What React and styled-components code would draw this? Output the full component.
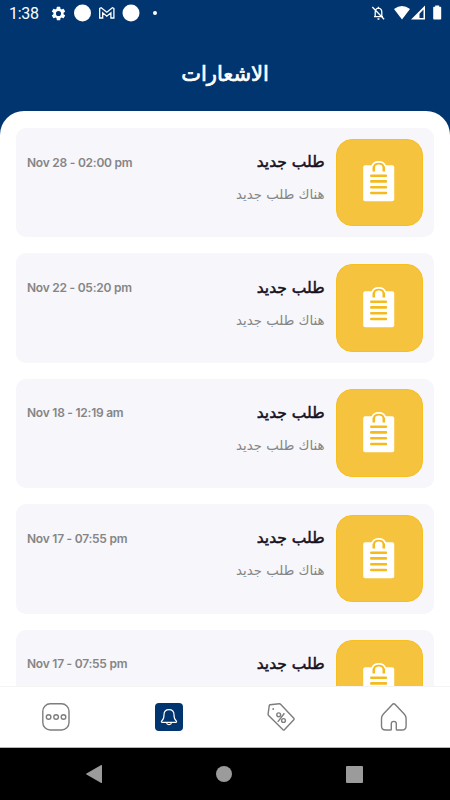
import React from 'react'
import styled, { createGlobalStyle } from 'styled-components'

const notifications = [
  { id: 1, date: 'Nov 28 - 02:00 pm' },
  { id: 2, date: 'Nov 22 - 05:20 pm' },
  { id: 3, date: 'Nov 18 - 12:19 am' },
  { id: 4, date: 'Nov 17 - 07:55 pm' },
  { id: 5, date: 'Nov 17 - 07:55 pm' }
]

const GlobalStyle = createGlobalStyle`
  * {
    box-sizing: border-box;
  }

  body {
    margin: 0;
    overflow: hidden;
  }
`

const Screen = styled.div`
  display: flex;
  flex-direction: column;
  width: 450px;
  height: 800px;
  overflow: hidden;
  background: #003570;
  font-family: 'DejaVu Sans', sans-serif;
`

const StatusBar = styled.div`
  display: flex;
  flex: none;
  justify-content: space-between;
  height: 28px;
  padding: 0 7px 0 9px;
  color: #fff;
`

const StatusGroup = styled.div`
  display: flex;
  align-items: center;
  height: 26px;

  svg {
    display: block;
  }
`

const Clock = styled.span`
  width: 41px;
  padding-top: 1px;
  font: 400 16px/27px Roboto, sans-serif;
  letter-spacing: -0.3px;
`

const Header = styled.header`
  display: flex;
  flex: none;
  align-items: center;
  justify-content: center;
  height: 83px;
`

const Title = styled.h1`
  margin: 0;
  padding-top: 8px;
  color: #fff;
  font-size: 21px;
  font-weight: normal;
  line-height: 30px;
  -webkit-text-stroke: 0.7px currentcolor;
`

const Sheet = styled.main`
  flex: 1;
  min-height: 0;
  overflow: hidden;
  padding: 17px 16px 0;
  border-radius: 24px 24px 0 0;
  background: #fff;
`

const List = styled.div`
  display: flex;
  flex-direction: column;
  gap: 16px;
`

const Card = styled.article`
  display: flex;
  flex: none;
  justify-content: space-between;
  height: 109.4px;
  padding: 10.7px 11px;
  border-radius: 10px;
  background: #f6f6fb;
`

const CardDate = styled.time`
  padding-top: 14px;
  color: #858585;
  font: 600 12px/20px Inter, sans-serif;
  letter-spacing: -0.24px;
  white-space: nowrap;
`

const CardMain = styled.div`
  display: flex;
  gap: 11px;
  direction: rtl;
`

const CardText = styled.div`
  padding-top: 10.5px;
`

const CardTitle = styled.h2`
  margin: 0;
  color: #15101f;
  font-size: 15.5px;
  font-weight: normal;
  line-height: 26px;
  white-space: nowrap;
  -webkit-text-stroke: 0.5px currentcolor;
`

const CardBody = styled.p`
  margin: 12px 0 0;
  color: #858585;
  font-size: 13.3px;
  line-height: 16px;
  white-space: nowrap;
`

const Tile = styled.div`
  display: flex;
  align-items: center;
  justify-content: center;
  width: 87.5px;
  height: 87.5px;
  border: 1px solid #f7c01f;
  border-radius: 16px;
  background: #f6c33e;
`

const TabBar = styled.nav`
  display: grid;
  flex: none;
  grid-template-columns: repeat(4, 1fr);
  align-items: center;
  justify-items: center;
  height: 62px;
  border-top: 1px solid #f4f4f4;
  border-bottom: 1px solid #b5b5b5;
  background: #fff;
`

const Tab = styled.div`
  display: flex;
  align-items: center;
  justify-content: center;
  width: 28px;
  height: 28px;
  border-radius: 4px;
  background: ${({ $active }) => ($active ? '#003570' : 'transparent')};
  color: ${({ $active }) => ($active ? '#fff' : '#7d7d7d')};
`

const SystemBar = styled.div`
  display: flex;
  flex: none;
  align-items: center;
  justify-content: space-between;
  height: 52px;
  padding: 0 87px 0 86px;
  background: #000;
`

const GearIcon = () => (
  <svg width='17' height='17' viewBox='0 0 24 24' fill='currentColor'>
    <path d='M19.14 12.94c.04-.3.06-.61.06-.94s-.02-.64-.07-.94l2.03-1.58a.49.49 0 0 0 .12-.61l-1.92-3.32a.49.49 0 0 0-.59-.22l-2.39.96c-.5-.38-1.03-.7-1.62-.94L14.4 2.81a.48.48 0 0 0-.48-.41h-3.84a.47.47 0 0 0-.47.41l-.36 2.54c-.59.24-1.13.57-1.62.94l-2.39-.96a.48.48 0 0 0-.59.22L2.74 8.87a.47.47 0 0 0 .12.61l2.03 1.58a7.5 7.5 0 0 0 0 1.88l-2.03 1.58a.49.49 0 0 0-.12.61l1.92 3.32c.12.22.37.29.59.22l2.39-.96c.5.38 1.03.7 1.62.94l.36 2.54c.05.24.24.41.48.41h3.84c.24 0 .44-.17.47-.41l.36-2.54c.59-.24 1.13-.56 1.62-.94l2.39.96c.22.08.47 0 .59-.22l1.92-3.32a.47.47 0 0 0-.12-.61zM12 15.6a3.6 3.6 0 1 1 0-7.2 3.6 3.6 0 0 1 0 7.2' />
  </svg>
)

const StatusIcons = () => (
  <svg width='90' height='18' viewBox='0 0 90 18' fill='currentColor'>
    <circle cx='15.5' cy='9' r='8.5' />
    <path d='M32.7 14V4.4l1.5-.7 5.6 4.5 5.6-4.5 1.5.7V14h-3V8.8l-4.1 3.4-4.1-3.4V14z' fill='none' stroke='currentColor' strokeWidth='1.3' />
    <circle cx='64' cy='9' r='8.5' />
    <circle cx='88' cy='9' r='2' />
  </svg>
)

const SignalIcons = () => (
  <svg width='73' height='18' viewBox='0 0 73 18' fill='currentColor'>
    <path d='M4 12.7h9M5.2 12.5V8.3c0-2.4 1.3-3.8 3.2-4.1 2.2.3 3.4 1.8 3.4 4.1v4.2M8.4 4V2.7M7.5 15h1.9M2.3 3l11.8 12.2' fill='none' stroke='currentColor' strokeWidth='1.3' />
    <path d='M24 5Q32 -1 40 5L32 15.5z' />
    <path d='M55 1.5V15.5H41zM53.5 5.6l-4 4.1V14h4z' fillRule='evenodd' />
    <path d='M65.2 2.8V1.5h4v1.3h1.2q.8 0 .8.8v11.1q0 .8-.8.8H64q-.8 0-.8-.8V3.6q0-.8.8-.8z' />
  </svg>
)

const ClipboardIcon = () => (
  <svg width='32' height='42' viewBox='0 0 32 42' fill='none'>
    <rect x='.2' y='4.3' width='31' height='36' rx='2' fill='#fff' />
    <path d='M10.8 10.5V6.7a5 5 0 0 1 10 0v3.8' stroke='#f5ba1d' strokeWidth='2.6' />
    <path d='M9.2 5C10.1 2 12.7.9 15.8.9S21.4 2 22.3 5' stroke='#fff' strokeWidth='1.8' />
    <path d='M12.8 8.5V6.4a3 3 0 0 1 6 0v2.1' fill='#fff' />
    <path d='M8.3 14.7h14.6M8.3 20.4h14.6M8.3 26.2h14.6M8.3 32h14.6' stroke='#f5ba1d' strokeWidth='2.6' strokeLinecap='round' />
  </svg>
)

const MoreIcon = () => (
  <svg width='28' height='28' viewBox='0 0 28 28' fill='none' stroke='currentColor' strokeWidth='1.4'>
    <rect x='.8' y='.8' width='26.2' height='26.2' rx='7.5' />
    <circle cx='6.6' cy='14' r='2.3' />
    <circle cx='14.1' cy='14' r='2.3' />
    <circle cx='21.5' cy='14' r='2.3' />
  </svg>
)

const BellIcon = () => (
  <svg width='28' height='28' viewBox='0 0 28 28' fill='none' stroke='currentColor' strokeWidth='1.2' strokeLinejoin='round'>
    <path d='M14 6.7c-3.2 0-5 2.2-5 5.1 0 3.2-.5 4.7-2.1 6-.8.7-.6 1.5.4 1.5h13.4c1 0 1.2-.8.4-1.5-1.6-1.3-2.1-2.8-2.1-6 0-2.9-1.8-5.1-5-5.1z' />
    <path d='M11.4 19.5c.3 1.5 1.2 2.1 2.6 2.1s2.3-.6 2.6-2.1' />
  </svg>
)

const TagIcon = () => (
  <svg width='28' height='28' viewBox='0 0 28 28' fill='none' stroke='currentColor' strokeWidth='1.4' strokeLinejoin='round'>
    <path d='M3.1 1.8 12.2.8q.9-.1 1.6.6L26.8 15.2q.7.8 0 1.5L17.4 26.8q-.7.7-1.4 0L1.6 12.6q-.6-.6-.5-1.5L2.2 2.8q.1-.8.9-1z' />
    <circle cx='6.2' cy='6' r='.9' fill='currentColor' stroke='none' />
    <circle cx='11.7' cy='11.8' r='1.9' />
    <circle cx='16.5' cy='17.5' r='1.9' />
    <path d='m17.4 10.3-6.6 8.6' />
  </svg>
)

const HomeIcon = () => (
  <svg width='28' height='28' viewBox='0 0 28 28' fill='none' stroke='currentColor' strokeWidth='1.4' strokeLinejoin='round'>
    <path d='M12.4 1.4q1.4-1.2 2.8 0l9 9.6q1.9 2 1.9 4.6v7.3q0 4.1-4.1 4.1h-4.9q-.8 0-.8-.8v-5.6q0-2.2-2.5-2.2t-2.5 2.2v5.6q0 .8-.8.8H5.6q-4.1 0-4.1-4.1v-7.3q0-2.6 1.9-4.6z' />
  </svg>
)

export default function App () {
  return (
    <Screen>
      <GlobalStyle />
      <StatusBar>
        <StatusGroup>
          <Clock>1:38</Clock>
          <GearIcon />
          <StatusIcons />
        </StatusGroup>
        <StatusGroup>
          <SignalIcons />
        </StatusGroup>
      </StatusBar>
      <Header>
        <Title dir='rtl' lang='ar'>الاشعارات</Title>
      </Header>
      <Sheet>
        <List>
          {notifications.map(({ id, date }) => (
            <Card key={id}>
              <CardDate>{date}</CardDate>
              <CardMain lang='ar'>
                <Tile>
                  <ClipboardIcon />
                </Tile>
                <CardText>
                  <CardTitle>طلب جديد</CardTitle>
                  <CardBody>هناك طلب جديد</CardBody>
                </CardText>
              </CardMain>
            </Card>
          ))}
        </List>
      </Sheet>
      <TabBar>
        <Tab><MoreIcon /></Tab>
        <Tab $active><BellIcon /></Tab>
        <Tab><TagIcon /></Tab>
        <Tab><HomeIcon /></Tab>
      </TabBar>
      <SystemBar>
        <svg width='16' height='20' viewBox='0 0 16 20' fill='#9b9b9b'>
          <path d='M15.2 1q.8-.4.8.5v17q0 .9-.8.5L.5 10.5q-.8-.5 0-1z' />
        </svg>
        <svg width='16' height='16' viewBox='0 0 16 16' fill='#9b9b9b'>
          <circle cx='8' cy='8' r='8' />
        </svg>
        <svg width='17' height='17' viewBox='0 0 17 17' fill='#9b9b9b'>
          <rect width='17' height='17' rx='1' />
        </svg>
      </SystemBar>
    </Screen>
  )
}
